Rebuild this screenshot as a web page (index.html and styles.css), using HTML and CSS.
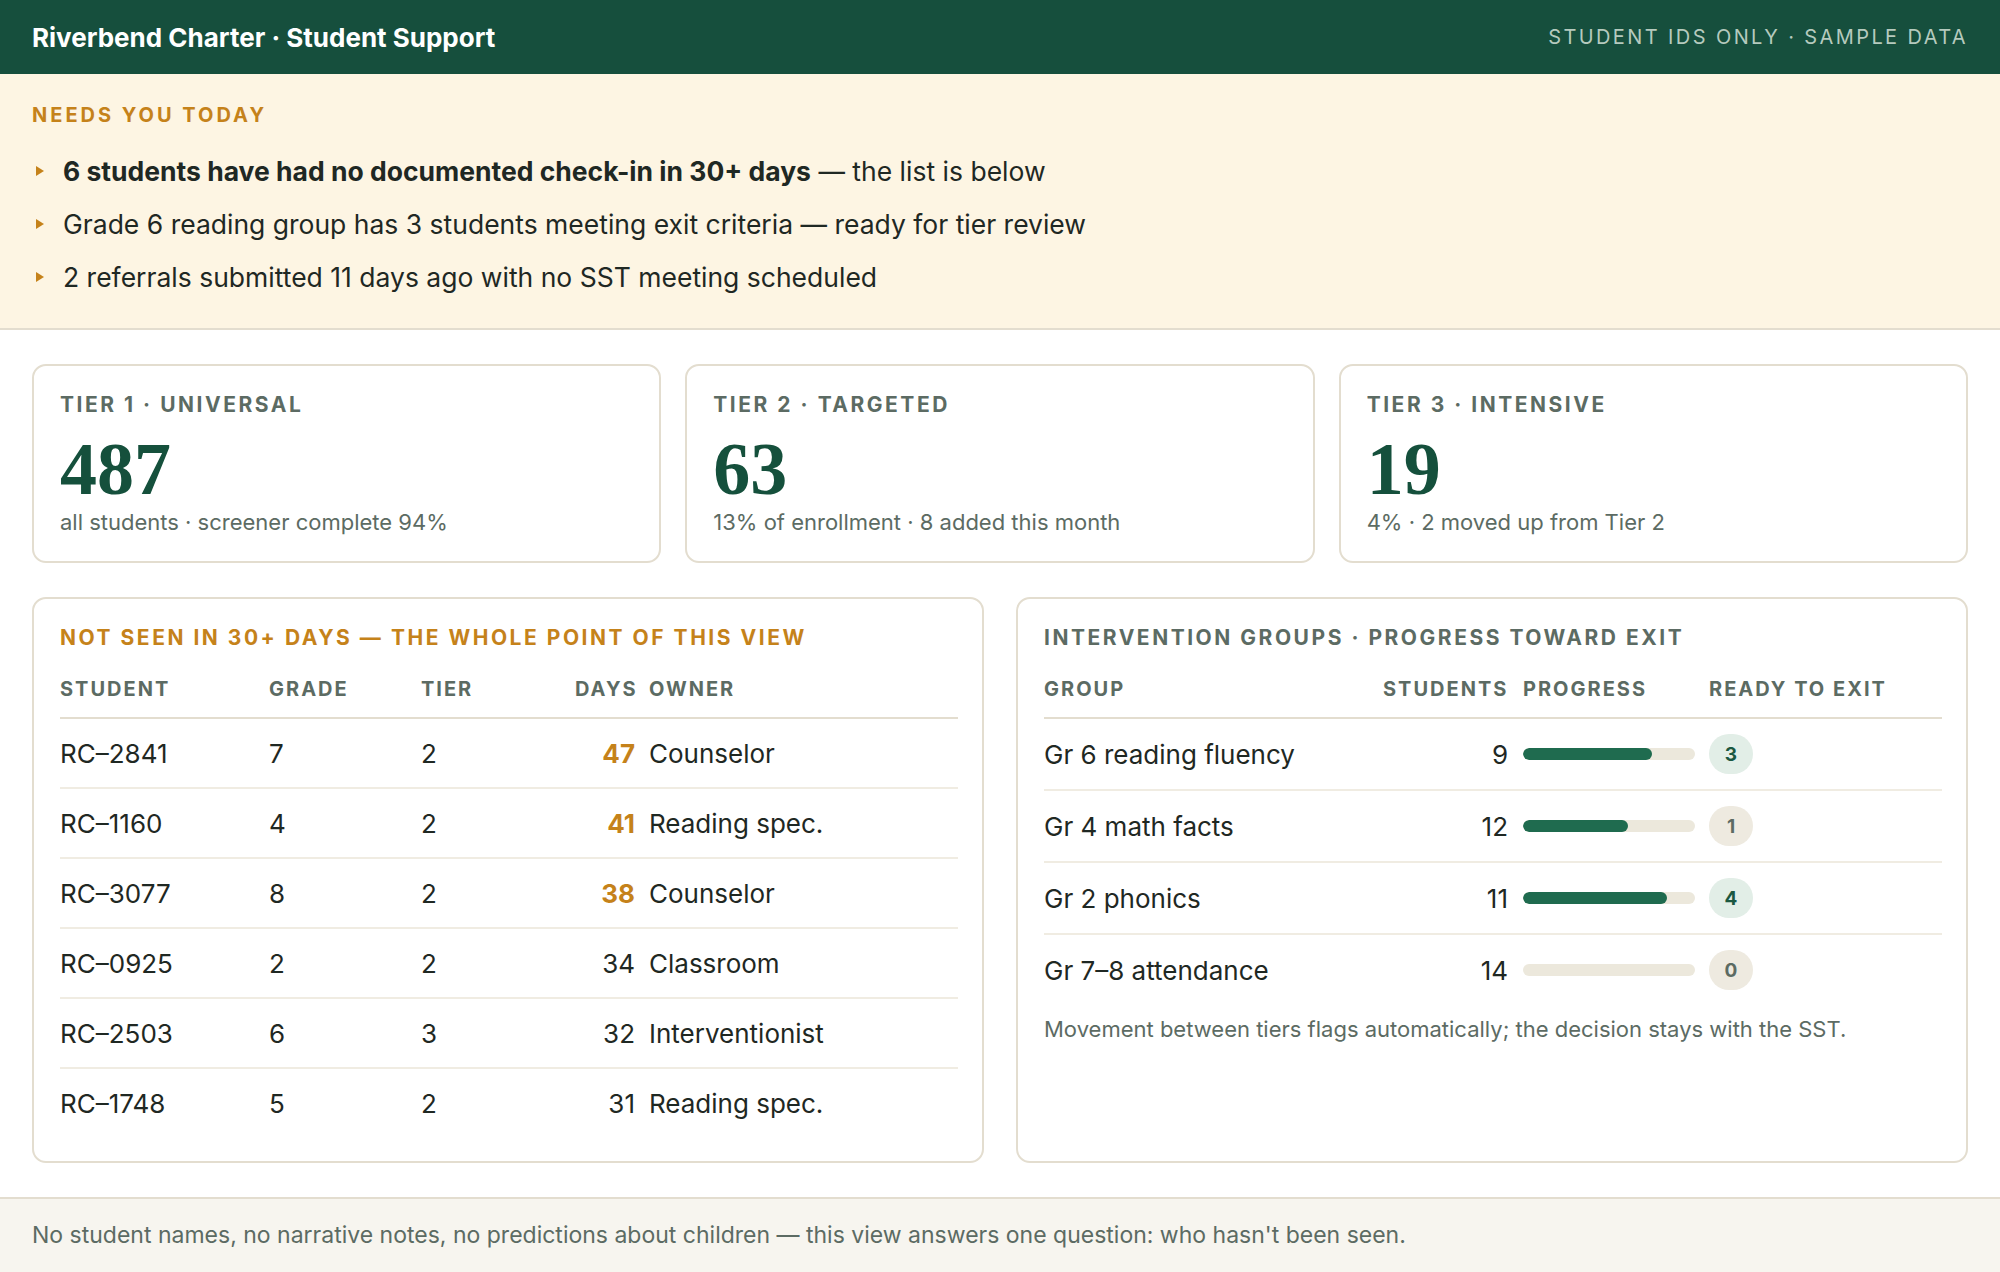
FILE: index.html
```html
<!DOCTYPE html>
<html lang="en">
<head>
    <meta charset="UTF-8">
    <meta name="viewport" content="width=device-width, initial-scale=1.0">
    <title>Riverbend Charter · Student Support</title>
    <link rel="stylesheet" href="styles.css">
</head>
<body>

<header class="topbar">
    <div class="brand">Riverbend Charter · Student Support</div>
    <div class="topbar-note">Student IDs only · sample data</div>
</header>

<section class="alerts">
    <div class="alerts-title">Needs you today</div>
    <ul class="alert-list">
        <li><span><strong>6 students have had no documented check-in in 30+ days</strong> — the list is below</span></li>
        <li><span>Grade 6 reading group has 3 students meeting exit criteria — ready for tier review</span></li>
        <li><span>2 referrals submitted 11 days ago with no SST meeting scheduled</span></li>
    </ul>
</section>

<main class="content">
    <div class="tiers">
        <div class="card tier-card">
            <div class="label">Tier 1 · Universal</div>
            <div class="big-number">487</div>
            <div class="muted">all students · screener complete 94%</div>
        </div>
        <div class="card tier-card">
            <div class="label">Tier 2 · Targeted</div>
            <div class="big-number">63</div>
            <div class="muted">13% of enrollment · 8 added this month</div>
        </div>
        <div class="card tier-card">
            <div class="label">Tier 3 · Intensive</div>
            <div class="big-number">19</div>
            <div class="muted">4% · 2 moved up from Tier 2</div>
        </div>
    </div>

    <div class="panels">
        <!-- Students not seen -->
        <div class="card panel">
            <div class="label label-warn">Not seen in 30+ days — the whole point of this view</div>
            <div class="grid unseen head">
                <span>Student</span><span>Grade</span><span>Tier</span><span class="num">Days</span><span class="owner">Owner</span>
            </div>
            <div class="grid unseen row">
                <span>RC–2841</span><span>7</span><span>2</span><span class="num late">47</span><span class="owner">Counselor</span>
            </div>
            <div class="grid unseen row">
                <span>RC–1160</span><span>4</span><span>2</span><span class="num late">41</span><span class="owner">Reading spec.</span>
            </div>
            <div class="grid unseen row">
                <span>RC–3077</span><span>8</span><span>2</span><span class="num late">38</span><span class="owner">Counselor</span>
            </div>
            <div class="grid unseen row">
                <span>RC–0925</span><span>2</span><span>2</span><span class="num">34</span><span class="owner">Classroom</span>
            </div>
            <div class="grid unseen row">
                <span>RC–2503</span><span>6</span><span>3</span><span class="num">32</span><span class="owner">Interventionist</span>
            </div>
            <div class="grid unseen row">
                <span>RC–1748</span><span>5</span><span>2</span><span class="num">31</span><span class="owner">Reading spec.</span>
            </div>
        </div>

        <!-- Intervention groups -->
        <div class="card panel">
            <div class="label">Intervention groups · progress toward exit</div>
            <div class="grid groups head">
                <span>Group</span><span class="num">Students</span><span>Progress</span><span>Ready to exit</span>
            </div>
            <div class="grid groups row">
                <span>Gr 6 reading fluency</span><span class="num">9</span>
                <span class="bar"><span class="fill" style="width: 75%"></span></span>
                <span><span class="badge good">3</span></span>
            </div>
            <div class="grid groups row">
                <span>Gr 4 math facts</span><span class="num">12</span>
                <span class="bar"><span class="fill" style="width: 61%"></span></span>
                <span><span class="badge">1</span></span>
            </div>
            <div class="grid groups row">
                <span>Gr 2 phonics</span><span class="num">11</span>
                <span class="bar"><span class="fill" style="width: 84%"></span></span>
                <span><span class="badge good">4</span></span>
            </div>
            <div class="grid groups row">
                <span>Gr 7–8 attendance</span><span class="num">14</span>
                <span class="bar"><span class="fill" style="width: 0%"></span></span>
                <span><span class="badge">0</span></span>
            </div>
            <p class="muted footnote">Movement between tiers flags automatically; the decision stays with the SST.</p>
        </div>
    </div>
</main>

<footer class="footer">
    No student names, no narrative notes, no predictions about children — this view answers one question: who hasn't been seen.
</footer>

</body>
</html>
```

FILE: styles.css
```css
body {
    margin: 0;
    font-family: Inter, "Liberation Sans", sans-serif;
    color: #1f2823;
    background-color: #ffffff;
}

.topbar {
    height: 74px;
    padding: 0 32px;
    display: flex;
    align-items: center;
    justify-content: space-between;
    background-color: #164f3d;
}

.brand {
    color: #ffffff;
    font-size: 26px;
    font-weight: 700;
}

.topbar-note {
    color: #b5cabe;
    font-size: 20px;
    letter-spacing: 0.12em;
    text-transform: uppercase;
}

/* Needs you today */
.alerts {
    padding: 28px 32px 25px;
    background-color: #fdf5e3;
    border-bottom: 2px solid #e3ddcf;
}

.alerts-title {
    line-height: 26px;
    font-size: 20px;
    font-weight: 700;
    letter-spacing: 0.15em;
    text-transform: uppercase;
    color: #c5821a;
}

.alert-list {
    list-style: none;
    margin: 16px 0 0;
    padding: 0;
}

.alert-list li {
    display: flex;
    align-items: center;
    gap: 19px;
    height: 53px;
    padding-left: 4px;
    font-size: 26.5px;
}

.alert-list li::before {
    content: "";
    width: 0;
    height: 0;
    border-left: 8px solid #c5821a;
    border-top: 5px solid transparent;
    border-bottom: 5px solid transparent;
}

.alert-list strong {
    font-weight: 700;
}

/* Main area */
.content {
    padding: 34px 32px;
}

.tiers {
    display: grid;
    grid-template-columns: repeat(3, 1fr);
    gap: 24px;
}

.card {
    border: 2px solid #e3ddcf;
    border-radius: 14px;
    background-color: #ffffff;
}

.tier-card {
    padding: 24px 24px 25px 26px;
}

.label {
    line-height: 30px;
    font-size: 21px;
    font-weight: 700;
    letter-spacing: 0.12em;
    text-transform: uppercase;
    color: #5c6b63;
}

.label-warn {
    color: #c5821a;
}

.big-number {
    margin-top: 14px;
    line-height: 70px;
    font-family: "Liberation Serif", serif;
    font-size: 74px;
    font-weight: 700;
    color: #15503c;
}

.muted {
    color: #5c6b63;
    font-size: 22px;
    line-height: 28px;
}

.tier-card .muted {
    margin-top: 4px;
}

.panels {
    display: grid;
    grid-template-columns: 1fr 1fr;
    gap: 32px;
    margin-top: 34px;
}

.panel {
    padding: 24px 24px 24px 26px;
}

/* table-like rows */
.grid {
    display: grid;
    align-items: center;
}

.unseen {
    grid-template-columns: 209px 152px 154px 60px 1fr;
}

.groups {
    grid-template-columns: 1fr 140px 186px 233px;
}

.head {
    margin-top: 16px;
    height: 40px;
    padding-bottom: 8px;
    border-bottom: 2px solid #e3ddcf;
    font-size: 20px;
    font-weight: 700;
    letter-spacing: 0.1em;
    text-transform: uppercase;
    color: #5c6b63;
}

.row {
    font-size: 26px;
    border-bottom: 2px solid #f0ece2;
}

.unseen.row {
    height: 68px;
}

.groups.row {
    height: 70px;
}

.row:last-of-type {
    border-bottom: none;
}

.num {
    text-align: right;
}

.groups .num {
    padding-right: 15px;
}

.owner {
    padding-left: 14px;
}

.late {
    color: #c5821a;
    font-weight: 700;
}

.bar {
    display: block;
    width: 172px;
    height: 12px;
    border-radius: 6px;
    background-color: #ece8dc;
    overflow: hidden;
}

.fill {
    display: block;
    height: 100%;
    border-radius: 6px;
    background-color: #1f6b4f;
}

.badge {
    display: inline-flex;
    align-items: center;
    justify-content: center;
    min-width: 44px;
    height: 40px;
    border-radius: 20px;
    font-size: 19px;
    font-weight: 700;
    background-color: #eeeae0;
    color: #5c6b63;
}

.badge.good {
    background-color: #e2eee7;
    color: #1b5841;
}

.footnote {
    margin: 10px 0 0;
}

.footer {
    padding: 24px 32px 25px;
    border-top: 2px solid #e3ddcf;
    background-color: #f7f5ef;
    color: #5c6b63;
    font-size: 23px;
    line-height: 24px;
}
```
